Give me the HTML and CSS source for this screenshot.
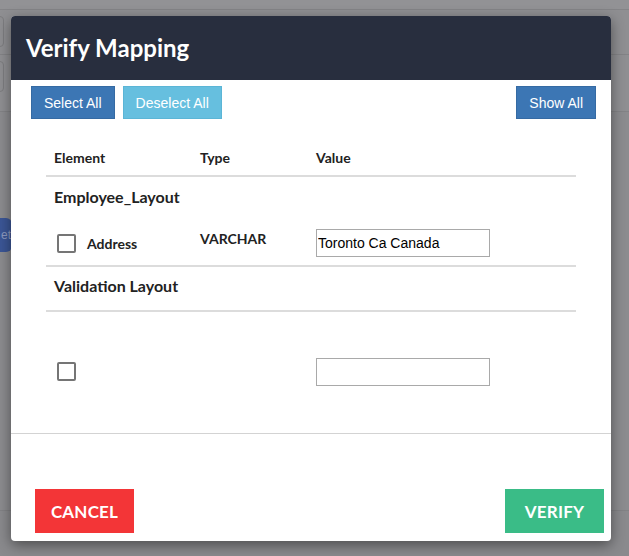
FILE: index.html
```html
<!DOCTYPE html>
<html>
<head>
<meta charset="utf-8">
<title>Verify Mapping</title>
<link rel="stylesheet" href="styles.css">
</head>
<body>
<div class="app">
  <div class="app-top"></div>
  <div class="app-toolbar">
    <div class="app-box"></div>
  </div>
  <div class="app-toolbar second">
    <div class="app-box"></div>
  </div>
  <div class="app-canvas">
    <div class="app-node">et</div>
  </div>
  <div class="app-bottom"></div>
</div>

<div class="modal">
  <div class="modal-header">
    <h1 class="modal-title">Verify Mapping</h1>
  </div>
  <div class="modal-body">
    <div class="btn-row">
      <button class="btn btn-primary">Select All</button>
      <button class="btn btn-info">Deselect All</button>
      <span class="spacer"></span>
      <button class="btn btn-primary">Show All</button>
    </div>
    <div class="table">
      <div class="thead grid">
        <div>Element</div>
        <div>Type</div>
        <div>Value</div>
      </div>
      <div class="group-title">Employee_Layout</div>
      <div class="item grid">
        <div class="cell-el"><span class="checkbox"></span><span class="el-name">Address</span></div>
        <div class="cell-type">VARCHAR</div>
        <div><input class="value-input" type="text" value="Toronto Ca Canada"></div>
      </div>
      <div class="group-title bordered">Validation Layout</div>
      <div class="item grid empty">
        <div class="cell-el"><span class="checkbox"></span></div>
        <div class="cell-type"></div>
        <div><input class="value-input" type="text" value=""></div>
      </div>
    </div>
  </div>
  <div class="modal-footer">
    <button class="btn-lg btn-danger">CANCEL</button>
    <button class="btn-lg btn-success">VERIFY</button>
  </div>
</div>
</body>
</html>
```

FILE: styles.css
```css
* { box-sizing: border-box; }

html, body {
  margin: 0;
  padding: 0;
  width: 629px;
  height: 556px;
  overflow: hidden;
}

body {
  background: #8d8d90;
  font-family: "Lato", "Liberation Sans", sans-serif;
  color: #222;
  position: relative;
}

/* dimmed background app */
.app { height: 556px; display: flex; flex-direction: column; }
.app-top { height: 10px; background: #929295; border-bottom: 1px solid #848487; }
.app-toolbar {
  height: 45px;
  padding-top: 6px;
  border-bottom: 1px solid #838386;
  background: #8f8f92;
}
.app-toolbar.second { height: 57px; padding-top: 6px; }
.app-box {
  width: 36px;
  height: 31px;
  margin-left: -32px;
  border: 1px solid #7d7d80;
  border-radius: 4px;
}
.app-canvas { flex: 1; position: relative; background: #8c8c8f; }
.app-node {
  position: absolute;
  left: -10px;
  top: 106px;
  width: 22px;
  height: 34px;
  background: #3b5696;
  border-radius: 6px;
  color: #8e9bc0;
  font-family: "Liberation Sans", sans-serif;
  font-size: 12px;
  line-height: 34px;
  text-align: right;
  padding-right: 1px;
}
.app-bottom { height: 46px; border-top: 1px solid #828285; background: #8a8a8d; }

/* modal */
.modal {
  position: absolute;
  left: 11px;
  top: 16px;
  width: 600px;
  height: 525px;
  background: #fff;
  border-radius: 4px;
  box-shadow: 0 4px 14px rgba(0, 0, 0, 0.45);
  display: flex;
  flex-direction: column;
  overflow: hidden;
}

.modal-header {
  height: 64px;
  background: #282e3e;
  display: flex;
  align-items: center;
  padding-left: 15px;
}
.modal-title {
  margin: 0;
  color: #fff;
  font-family: "Lato", sans-serif;
  font-weight: 700;
  font-size: 24px;
  line-height: 30px;
}

.modal-body {
  height: 354px;
  border-bottom: 1px solid #d3d3d3;
}

.btn-row {
  display: flex;
  gap: 8px;
  padding: 6px 15px 0 20px;
}
.spacer { flex: 1; }

.btn {
  height: 33px;
  padding: 0 12px;
  border: 1px solid transparent;
  font-family: "Liberation Sans", "Arimo", sans-serif;
  font-size: 14px;
  color: #fff;
  border-radius: 0;
}
.btn-primary { background: #3c76b4; border-color: #356aa3; }
.btn-info { background: #66bfdf; border-color: #5bb5d6; }

.table {
  margin: 19px 35px 0 35px;
}
.grid {
  display: grid;
  grid-template-columns: 146px 116px 1fr;
  padding: 0 8px;
}
.thead {
  padding-top: 10px;
  padding-bottom: 7px;
  line-height: 20px;
  font-size: 14px;
  font-weight: 700;
  color: #222;
  border-bottom: 2px solid #dcdcdc;
}
.group-title {
  padding: 10px 8px 13px;
  line-height: 20px;
  font-size: 16px;
  font-weight: 700;
  color: #222;
}
.group-title.bordered {
  padding-top: 9px;
  padding-bottom: 14px;
  border-top: 2px solid #dcdcdc;
  border-bottom: 2px solid #dcdcdc;
}

.item {
  padding-top: 9px;
  padding-bottom: 8px;
  align-items: start;
}
.item.empty { padding-top: 46px; }

.cell-el {
  display: flex;
  align-items: center;
  height: 28px;
  padding-left: 3px;
}
.checkbox {
  width: 19px;
  height: 19px;
  border: 2px solid #757575;
  border-radius: 2px;
  flex: none;
}
.item.empty .checkbox { margin-top: -1px; }
.el-name {
  margin-left: 11px;
  font-size: 14px;
  font-weight: 700;
  color: #222;
  padding-top: 1px;
}
.cell-type {
  line-height: 20px;
  font-size: 14px;
  font-weight: 700;
  color: #222;
}
.value-input {
  display: block;
  width: 174px;
  height: 28px;
  margin: 0;
  padding: 0 1px;
  border: 1px solid #a9a9a9;
  border-radius: 0;
  font-family: "Liberation Sans", "Arimo", sans-serif;
  font-size: 14px;
  color: #000;
  background: #fff;
  outline: none;
}

.modal-footer {
  flex: 1;
  display: flex;
  justify-content: space-between;
  align-items: flex-end;
  padding: 0 7px 8px 24px;
}
.btn-lg {
  width: 99px;
  height: 44px;
  border: none;
  border-radius: 0;
  color: #fff;
  font-family: "Lato", sans-serif;
  font-weight: 700;
  font-size: 17px;
  letter-spacing: 0.2px;
}
.btn-danger { background: #f33537; }
.btn-success { background: #3abc87; }
```
